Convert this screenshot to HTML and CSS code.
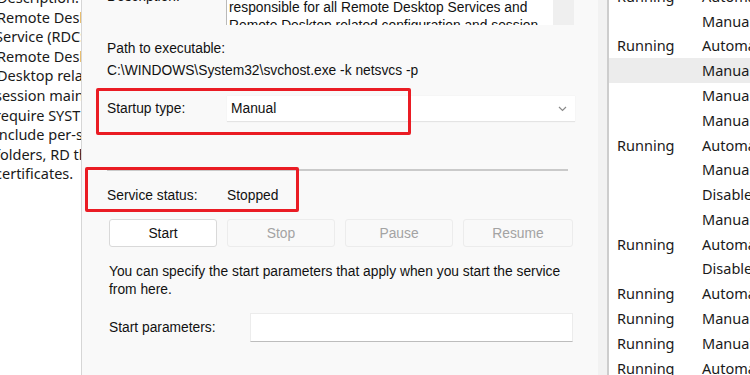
FILE: index.html
```html
<!DOCTYPE html>
<html lang="en">
<head>
    <meta charset="UTF-8">
    <title>Remote Desktop Configuration Properties</title>
    <link rel="stylesheet" href="styles.css">
</head>
<body>
    <div class="screen">
        <div class="desc-pane">
            <div class="line">Description:</div>
            <div class="line">Remote Desktop Configuration</div>
            <div class="line shift">Service (RDCS) is responsible for</div>
            <div class="line">Remote Desktop Services and</div>
            <div class="line">Desktop related configuration</div>
            <div class="line shift">session maintenance activities</div>
            <div class="line shift">require SYSTEM context. These</div>
            <div class="line shift">include per-session temporary</div>
            <div class="line shift">folders, RD themes, and RD</div>
            <div class="line shift">certificates.</div>
        </div>

        <div class="dialog">
            <div class="form">
                <div class="row desc-row">
                    <span class="label">Description:</span>
                    <div class="desc-box">
                        <div class="desc-text">
                            <div>Remote Desktop Configuration Service (RDCS) is</div>
                            <div>responsible for all Remote Desktop Services and</div>
                            <div>Remote Desktop related configuration and session</div>
                        </div>
                        <div class="scroll"></div>
                    </div>
                </div>

                <div class="path-label">Path to executable:</div>
                <div class="path">C:\WINDOWS\System32\svchost.exe -k netsvcs -p</div>

                <div class="row startup-row">
                    <span class="label">Startup type:</span>
                    <div class="combo">
                        <span>Manual</span>
                        <svg width="9" height="6" viewBox="0 0 9 6"><polyline points="1,1 4.5,4.5 8,1" fill="none" stroke="#8a8a8a" stroke-width="1.2"/></svg>
                    </div>
                </div>

                <div class="separator"></div>

                <div class="row status-row">
                    <span class="label">Service status:</span>
                    <span>Stopped</span>
                </div>

                <div class="buttons">
                    <button>Start</button>
                    <button disabled>Stop</button>
                    <button disabled>Pause</button>
                    <button disabled>Resume</button>
                </div>

                <p class="hint">You can specify the start parameters that apply when you start the service<br>from here.</p>

                <div class="row params-row">
                    <span class="label">Start parameters:</span>
                    <div class="params-box"></div>
                </div>
            </div>
            <div class="edge"></div>

            <div class="mark mark-startup"></div>
            <div class="mark mark-status"></div>
        </div>

        <div class="services">
            <div class="svc"><span class="status">Running</span><span>Automatic</span></div>
            <div class="svc"><span class="status"></span><span>Manual</span></div>
            <div class="svc"><span class="status">Running</span><span>Automatic</span></div>
            <div class="svc selected"><span class="status"></span><span>Manual</span></div>
            <div class="svc"><span class="status"></span><span>Manual</span></div>
            <div class="svc"><span class="status"></span><span>Manual</span></div>
            <div class="svc"><span class="status">Running</span><span>Automatic</span></div>
            <div class="svc"><span class="status"></span><span>Manual</span></div>
            <div class="svc"><span class="status"></span><span>Disabled</span></div>
            <div class="svc"><span class="status"></span><span>Manual</span></div>
            <div class="svc"><span class="status">Running</span><span>Automatic</span></div>
            <div class="svc"><span class="status"></span><span>Disabled</span></div>
            <div class="svc"><span class="status">Running</span><span>Automatic</span></div>
            <div class="svc"><span class="status">Running</span><span>Manual</span></div>
            <div class="svc"><span class="status">Running</span><span>Manual</span></div>
            <div class="svc"><span class="status">Running</span><span>Automatic</span></div>
        </div>
    </div>
</body>
</html>
```

FILE: styles.css
```css
*{
    box-sizing: border-box;
}
html, body{
    margin: 0;
    padding: 0;
}
body{
    width: 750px;
    height: 375px;
    overflow: hidden;
    background-color: #ffffff;
}
.screen{
    display: flex;
    height: 375px;
    overflow: hidden;
}

/* left description pane */
.desc-pane{
    flex: 0 0 82px;
    overflow: hidden;
    border-right: 1px solid #d6d6d6;
    background-color: #ffffff;
    color: #1a1a1a;
    font-family: "Noto Sans", sans-serif;
    font-size: 14.5px;
    margin-top: -12px;
    height: 389px;
}
.desc-pane .line{
    height: 19.6px;
    line-height: 19.6px;
    white-space: nowrap;
    margin-left: -3px;
}
.desc-pane .shift{
    margin-left: -5px;
}

/* properties dialog */
.dialog{
    position: relative;
    flex: 0 0 527px;
    display: flex;
    background-color: #f9f9f9;
    color: #111111;
    font-family: "Liberation Sans", Arial, sans-serif;
    font-size: 13.8px;
    line-height: 18px;
}
.form{
    flex: 1;
    padding-left: 25px;
}
.edge{
    flex: 0 0 11px;
    background-color: #f2f2f2;
    border-right: 2px solid #cdcdcd;
}
.row{
    display: flex;
    align-items: center;
}
.label{
    flex: 0 0 120px;
}
.desc-row{
    height: 25px;
    align-items: flex-start;
}
.desc-row .label{
    margin-top: -12px;
}
.desc-box{
    display: flex;
    width: 348px;
    height: 44px;
    margin-top: -19px;
    margin-left: -1px;
    background-color: #ffffff;
    border-left: 1px solid #b9b9b9;
    overflow: hidden;
}
.desc-text{
    flex: 1;
    padding-left: 2px;
    white-space: nowrap;
    overflow: hidden;
}
.scroll{
    flex: 0 0 21px;
    background-color: #efefef;
}
.path-label{
    margin-top: 15px;
}
.path{
    margin-top: 4px;
}
.startup-row{
    margin-top: 16px;
}
.combo{
    display: flex;
    align-items: center;
    justify-content: space-between;
    width: 348px;
    height: 26px;
    padding: 0 8px 0 4px;
    background-color: #ffffff;
    border-bottom: 1px solid #e4e4e4;
    box-shadow: 0 0 1px rgba(0,0,0,0.08);
}
.separator{
    width: 461px;
    height: 2px;
    margin-top: 47px;
    background-color: #cacaca;
}
.status-row{
    margin-top: 16px;
}
.buttons{
    display: flex;
    gap: 10px;
    margin-top: 14px;
    padding-left: 2px;
}
button{
    width: 108px;
    height: 28px;
    padding: 0;
    font-family: "Liberation Sans", Arial, sans-serif;
    font-size: 13.8px;
    color: #111111;
    background-color: #ffffff;
    border: 1px solid #d9d9d9;
    border-radius: 3px;
}
button:disabled{
    color: #a3a3a3;
    background-color: #f9f9f9;
    border-color: #ececec;
}
.buttons button:last-child{
    width: 110px;
}
.hint{
    margin: 16px 0 0 2px;
}
.params-row{
    margin-top: 14px;
    padding-left: 2px;
}
.params-row .label{
    flex-basis: 141px;
}
.params-box{
    width: 323px;
    height: 29px;
    background-color: #ffffff;
    border: 1px solid #ececec;
    border-bottom-color: #bdbdbd;
}

/* red annotation boxes */
.mark{
    position: absolute;
    border: 3px solid #ea1c24;
    border-radius: 2px;
}
.mark-startup{
    left: 14px;
    top: 88px;
    width: 315px;
    height: 47px;
}
.mark-status{
    left: 3px;
    top: 167px;
    width: 214px;
    height: 45px;
}

/* services list */
.services{
    flex: 1;
    background-color: #ffffff;
    font-family: "Noto Sans", sans-serif;
    font-size: 14.5px;
    color: #1a1a1a;
    margin-top: -16.2px;
    overflow: hidden;
}
.svc{
    display: flex;
    height: 24.79px;
    line-height: 24.79px;
    white-space: nowrap;
    padding-left: 8px;
}
.svc.selected{
    background-color: #ececec;
}
.status{
    flex: 0 0 85px;
}
```
